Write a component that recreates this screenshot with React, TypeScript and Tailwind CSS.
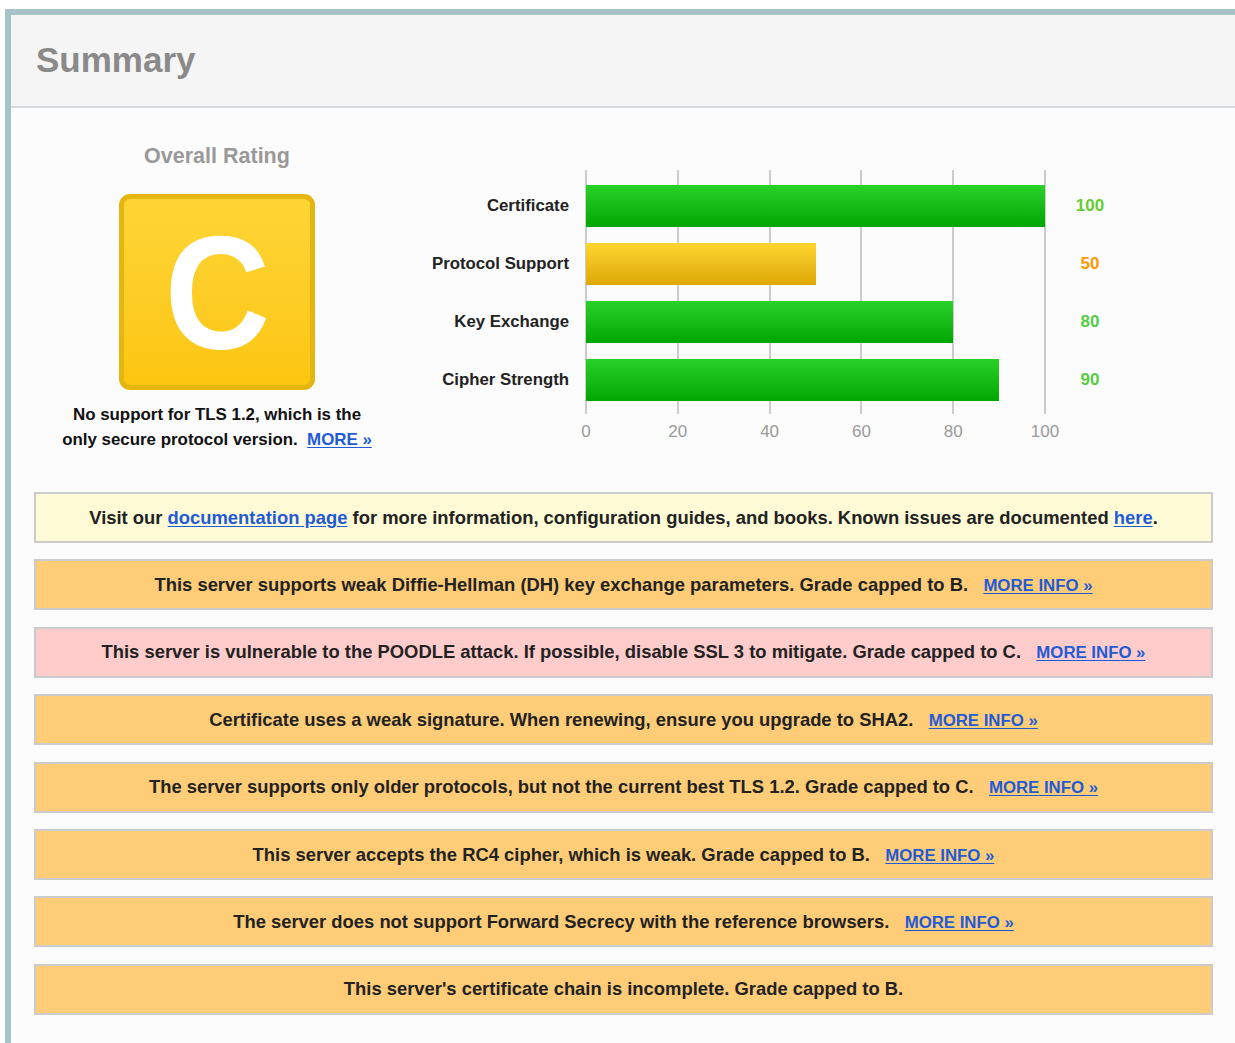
import React from "react";

type Score = { label: string; value: number; tone: "green" | "yellow"; color: string };

const scores: Score[] = [
  { label: "Certificate", value: 100, tone: "green", color: "text-[#6c3]" },
  { label: "Protocol Support", value: 50, tone: "yellow", color: "text-[#ff9900]" },
  { label: "Key Exchange", value: 80, tone: "green", color: "text-[#5c4]" },
  { label: "Cipher Strength", value: 90, tone: "green", color: "text-[#5c4]" },
];

const ticks = [
  { n: 0, line: "left-[-1px]", text: "left-0" },
  { n: 20, line: "left-[calc(20%-1px)]", text: "left-[20%]" },
  { n: 40, line: "left-[calc(40%-1px)]", text: "left-[40%]" },
  { n: 60, line: "left-[calc(60%-1px)]", text: "left-[60%]" },
  { n: 80, line: "left-[calc(80%-1px)]", text: "left-[80%]" },
  { n: 100, line: "left-[calc(100%-1px)]", text: "left-full" },
];

type Notice = { tone: "info" | "warn" | "bad"; text: React.ReactNode; more?: boolean };

const Link = ({ children, className = "" }: { children: React.ReactNode; className?: string }) => (
  <a href="#" className={`text-[#1f5bd6] underline underline-offset-2 ${className}`}>
    {children}
  </a>
);

const notices: Notice[] = [
  {
    tone: "info",
    text: (
      <>
        Visit our <Link>documentation page</Link> for more information, configuration guides, and books. Known
        issues are documented <Link>here</Link>.
      </>
    ),
  },
  {
    tone: "warn",
    text: "This server supports weak Diffie-Hellman (DH) key exchange parameters. Grade capped to B.",
    more: true,
  },
  {
    tone: "bad",
    text: "This server is vulnerable to the POODLE attack. If possible, disable SSL 3 to mitigate. Grade capped to C.",
    more: true,
  },
  {
    tone: "warn",
    text: "Certificate uses a weak signature. When renewing, ensure you upgrade to SHA2.",
    more: true,
  },
  {
    tone: "warn",
    text: "The server supports only older protocols, but not the current best TLS 1.2. Grade capped to C.",
    more: true,
  },
  {
    tone: "warn",
    text: "This server accepts the RC4 cipher, which is weak. Grade capped to B.",
    more: true,
  },
  {
    tone: "warn",
    text: "The server does not support Forward Secrecy with the reference browsers.",
    more: true,
  },
  {
    tone: "warn",
    text: "This server's certificate chain is incomplete. Grade capped to B.",
  },
];

const toneBg: Record<Notice["tone"], string> = {
  info: "bg-[#fffbd6]",
  warn: "bg-[#ffcc77]",
  bad: "bg-[#ffcccc]",
};

function Chart() {
  return (
    <div className="mt-[26px] flex">
      <div className="flex w-[169px] flex-col gap-[16px] pt-[15px]">
        {scores.map((s) => (
          <div key={s.label} className="flex h-[42px] items-center justify-end text-[16.8px] font-bold text-[#222]">
            {s.label}
          </div>
        ))}
      </div>
      <div className="ml-[17px] w-[459px]">
        <div className="relative flex flex-col gap-[16px] pb-[13px] pt-[15px]">
          {ticks.map((t) => (
            <div key={t.n} className={`absolute bottom-0 top-0 w-[2px] bg-[#cccccc] ${t.line}`} />
          ))}
          {scores.map((s) => (
            <div key={s.label} className="relative h-[42px]">
              <div
                className={
                  s.tone === "green"
                    ? "h-full bg-linear-to-b from-[#27d227] to-[#00a600]"
                    : "h-full bg-linear-to-b from-[#ffd62e] to-[#dda800]"
                }
                style={{ width: `${s.value}%` }}
              />
            </div>
          ))}
        </div>
        <div className="relative mt-[6px] h-[24px] text-[17px] text-[#999]">
          {ticks.map((t) => (
            <span key={t.n} className={`absolute top-0 -translate-x-1/2 leading-[24px] ${t.text}`}>
              {t.n}
            </span>
          ))}
        </div>
      </div>
      <div className="flex w-[90px] flex-col gap-[16px] pt-[15px]">
        {scores.map((s) => (
          <div key={s.label} className={`flex h-[42px] items-center justify-center text-[17px] font-bold ${s.color}`}>
            {s.value}
          </div>
        ))}
      </div>
    </div>
  );
}

export default function App() {
  return (
    <div className="min-h-screen bg-white pl-[5px] pt-[9px] font-['Liberation_Sans',Arial,Helvetica,sans-serif]">
      <div className="flex min-h-[1034px] flex-col border-l-[6px] border-t-[6px] border-[#a6c4c7]">
        <div className="flex h-[93px] items-center border-b-2 border-[#d6dbde] bg-[#f5f5f5] pl-[25px]">
          <h1 className="text-[35px] font-bold text-[#8a8a8a]">Summary</h1>
        </div>
        <div className="flex-1 bg-[#fcfcfc] pl-[23px] pr-[22px] pt-[36px]">
          <div className="flex items-start">
            <div className="flex w-[366px] flex-col items-center">
              <div className="text-[21.5px] font-bold leading-[24px] text-[#999]">Overall Rating</div>
              <div className="mt-[26px] flex h-[196px] w-[196px] items-center justify-center rounded-[11px] border-[5px] border-[#e6b610] bg-linear-to-b from-[#fed535] to-[#fdc60f]">
                <span className="inline-block scale-x-[0.9] text-[162px] font-bold leading-none text-white">C</span>
              </div>
              <p className="mt-[12px] text-center text-[16.9px] font-bold leading-[25px] text-[#111]">
                No support for TLS 1.2, which is the
                <br />
                only secure protocol version.&nbsp;&nbsp;<Link>MORE »</Link>
              </p>
            </div>
            <Chart />
          </div>
          <div className="mt-[40px] flex flex-col gap-[16.4px]">
            {notices.map((n, i) => (
              <div
                key={i}
                className={`flex h-[51px] items-center justify-center border-2 border-[#cbcbcb] text-[18.4px] font-bold text-[#222] ${toneBg[n.tone]}`}
              >
                <span>
                  {n.text}
                  {n.more && (
                    <>
                      &nbsp;&nbsp;&nbsp;<Link className="text-[16.8px]">MORE INFO »</Link>
                    </>
                  )}
                </span>
              </div>
            ))}
          </div>
        </div>
      </div>
    </div>
  );
}
